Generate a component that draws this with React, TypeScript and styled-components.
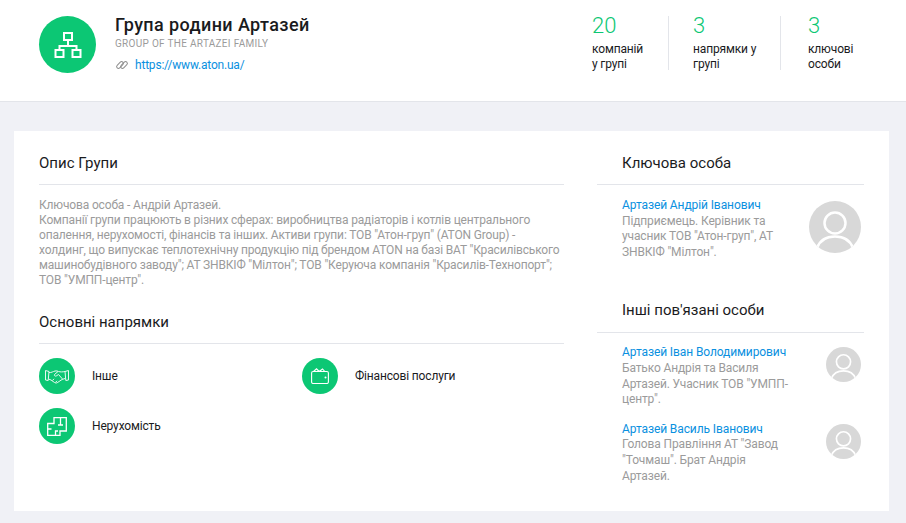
import styled, { createGlobalStyle } from 'styled-components';

const GlobalStyle = createGlobalStyle`
    html, body {
        margin: 0;
        padding: 0;
        background-color: #f0f1f6;
        font-family: Roboto, 'Liberation Sans', sans-serif;
    }
`;

const Page = styled.div`
    width: 906px;
    height: 523px;
    overflow: hidden;
`;

const Header = styled.header`
    height: 101px;
    background-color: white;
    border-bottom: 1px solid #e3e5ea;
    display: flex;
    flex-direction: row;
    justify-content: space-between;
    padding-left: 39px;
`;

const Brand = styled.div`
    display: flex;
    flex-direction: row;
    padding-top: 16px;
`;

const BrandLogo = styled.div`
    width: 57px;
    height: 57px;
    border-radius: 50%;
    background-color: #0cc774;
    display: flex;
    align-items: center;
    justify-content: center;
    margin-right: 19px;
`;

const BrandText = styled.div`
    display: flex;
    flex-direction: column;
`;

const BrandTitle = styled.h1`
    margin: 0;
    font-size: 18px;
    line-height: 17px;
    font-weight: 500;
    letter-spacing: 0.4px;
    color: #1a1b1d;
`;

const BrandSubtitle = styled.div`
    margin-top: 5px;
    font-size: 10px;
    line-height: 12px;
    letter-spacing: 0.3px;
    color: #9b9b9b;
    text-transform: uppercase;
`;

const BrandLink = styled.div`
    margin-top: 8px;
    display: flex;
    flex-direction: row;
    align-items: center;
    gap: 6px;
    font-size: 12px;
    line-height: 14px;
    letter-spacing: -0.2px;
    color: #0a90e0;
`;

const Stats = styled.div`
    display: flex;
    flex-direction: row;
    padding-top: 16px;
`;

const Stat = styled.div<{ $width: number; $pad: number; $last?: boolean }>`
    width: ${(props) => props.$width}px;
    height: 54px;
    box-sizing: border-box;
    padding-left: ${(props) => props.$pad}px;
    border-right: ${(props) => (props.$last ? 'none' : '1px solid #e3e5ea')};
`;

const StatNumber = styled.div`
    font-size: 22px;
    line-height: 20px;
    font-weight: 300;
    color: #0cc774;
`;

const StatLabel = styled.div`
    margin-top: 6px;
    font-size: 12px;
    line-height: 15px;
    letter-spacing: -0.15px;
    color: #1a1b1d;
`;

const Content = styled.main`
    padding: 29px 17px 0 14px;
`;

const Card = styled.section`
    height: 380px;
    background-color: white;
    display: flex;
    flex-direction: row;
    padding-left: 25px;
`;

const LeftColumn = styled.div`
    width: 525px;
    margin-right: 33px;
`;

const RightColumn = styled.div`
    width: 267px;
`;

const SectionTitle = styled.h2<{ $indent?: boolean; $height?: number }>`
    margin: 0;
    height: ${(props) => props.$height ?? 54}px;
    box-sizing: border-box;
    padding-top: 23px;
    padding-left: ${(props) => (props.$indent ? '25px' : '0')};
    font-size: 15px;
    line-height: 18px;
    font-weight: 400;
    color: #1a1b1d;
    border-bottom: 1px solid #e3e5ea;
`;

const Description = styled.p`
    margin: 13px 0 2px 0;
    font-size: 12px;
    line-height: 15px;
    letter-spacing: -0.16px;
    color: #9b9b9b;
`;

const Directions = styled.div`
    margin-top: 14px;
    display: grid;
    grid-template-columns: 263px 262px;
    row-gap: 14px;
`;

const Direction = styled.div`
    display: flex;
    flex-direction: row;
    align-items: center;
    gap: 17px;
    font-size: 12px;
    line-height: 34px;
    letter-spacing: -0.16px;
    color: #1a1b1d;
`;

const DirectionIcon = styled.div`
    width: 36px;
    height: 36px;
    border-radius: 50%;
    background-color: #0cc774;
    display: flex;
    align-items: center;
    justify-content: center;
`;

const Person = styled.div<{ $top: number }>`
    margin-top: ${(props) => props.$top}px;
    padding: 0 3px 0 25px;
    display: flex;
    flex-direction: row;
    justify-content: space-between;
`;

const PersonText = styled.div`
    width: 170px;
    font-size: 12px;
    line-height: 15.6px;
    letter-spacing: -0.14px;
    color: #9b9b9b;
`;

const PersonName = styled.div`
    letter-spacing: -0.1px;
    color: #0a90e0;
`;

const OtherTitle = styled.div`
    margin-top: 18px;
`;

const AvatarSlot = styled.div<{ $size: number; $top: number }>`
    width: ${(props) => props.$size}px;
    height: ${(props) => props.$size}px;
    margin-top: ${(props) => props.$top}px;
`;

const LogoIcon = () => (
    <svg width="28" height="28" viewBox="0 0 28 28" fill="none" stroke="white" strokeWidth="2">
        <rect x="10" y="2" width="8" height="7" />
        <rect x="1.5" y="19" width="8" height="7" />
        <rect x="18.5" y="19" width="8" height="7" />
        <path d="M14 9v6M5.5 19v-4h17v4" />
    </svg>
);

const LinkIcon = () => (
    <svg width="14" height="12" viewBox="0 0 14 12" fill="none" stroke="#8f8f8f" strokeWidth="1">
        <rect x="1" y="4.2" width="8" height="3.6" rx="1.800" transform="rotate(-45 5 6)" />
        <rect x="5" y="4.2" width="8" height="3.6" rx="1.800" transform="rotate(-45 9 6)" />
    </svg>
);

const HandshakeIcon = () => (
    <svg width="24" height="15" viewBox="0 0 24 15" fill="none" stroke="white" strokeWidth="1" opacity="0.9">
        <path d="M.5 1.500l3.500 1-.8 9-2.700-.5zM23.500 1.500l-3.500 1 .8 9 2.700-.5z" />
        <path d="M4 3.500c2.500.3 4-1 6-1.500 1.500-.3 2.500 0 3.500.5 2 .6 4 .5 6.500 0" />
        <path d="M3.500 10l2.500 1 3.500 2.500c1.200.8 2.500.6 3.500-.3l4-2.700 3-1" />
        <path d="M13 2.500L9.500 5.500c-.6 1 .6 2 1.700 1.500l2.300-1.500 4 4.500" />
        <path d="M7.500 11.500l1.500-1.700M10.500 13.500l1.500-1.700" />
    </svg>
);

const WalletIcon = () => (
    <svg width="18" height="16" viewBox="0 0 18 16" fill="none" stroke="white" strokeWidth="1.1">
        <rect x="0.6" y="3.500" width="16.800" height="12" rx="1.500" />
        <path d="M2.500 3.500L5.500.8l2.700 2.700M8.200 3.500L11.500 1l2.300 2.500" />
        <circle cx="14.500" cy="9.500" r="1" fill="white" stroke="none" />
    </svg>
);

const PlanIcon = () => (
    <svg width="20" height="19" viewBox="0 0 20 19" fill="none" stroke="white" strokeWidth="1.300">
        <path d="M7 6.500V.7h12.300v13.300H13v4.300H.7V6.500z" />
        <path d="M13.500.7v7.300M11 8h5M.7 12H4.500M8.500 18.300V14H11" />
    </svg>
);

const Avatar = ({ size, top }: { size: number; top: number }) => (
    <AvatarSlot $size={size} $top={top}>
        <svg width={size} height={size} viewBox="0 0 52 52">
            <defs>
                <clipPath id={`avatar-${size}`}>
                    <circle cx="26" cy="26" r="26" />
                </clipPath>
            </defs>
            <circle cx="26" cy="26" r="26" fill="#d8d8d8" />
            <circle cx="26" cy="22" r="10.500" fill="none" stroke="white" strokeWidth="2.500" />
            <path
                d="M8 47c3-8 10-11.500 18-11.500S41 39 44 47"
                fill="none"
                stroke="white"
                strokeWidth="2.500"
                clipPath={`url(#avatar-${size})`}
            />
        </svg>
    </AvatarSlot>
);

const App = () => {
    return (
        <Page>
            <GlobalStyle />
            <Header>
                <Brand>
                    <BrandLogo>
                        <LogoIcon />
                    </BrandLogo>
                    <BrandText>
                        <BrandTitle>Група родини Артазей</BrandTitle>
                        <BrandSubtitle>Group of the Artazei family</BrandSubtitle>
                        <BrandLink>
                            <LinkIcon />
                            https://www.aton.ua/
                        </BrandLink>
                    </BrandText>
                </Brand>
                <Stats>
                    <Stat $width={101} $pad={24}>
                        <StatNumber>20</StatNumber>
                        <StatLabel>
                            компаній
                            <br />у групі
                        </StatLabel>
                    </Stat>
                    <Stat $width={112} $pad={24}>
                        <StatNumber>3</StatNumber>
                        <StatLabel>
                            напрямки у
                            <br />
                            групі
                        </StatLabel>
                    </Stat>
                    <Stat $width={125} $pad={27} $last>
                        <StatNumber>3</StatNumber>
                        <StatLabel>
                            ключові
                            <br />
                            особи
                        </StatLabel>
                    </Stat>
                </Stats>
            </Header>
            <Content>
                <Card>
                    <LeftColumn>
                        <SectionTitle>Опис Групи</SectionTitle>
                        <Description>
                            Ключова особа - Андрій Артазей.
                            <br />
                            Компанії групи працюють в різних сферах: виробництва радіаторів і котлів центрального
                            опалення, нерухомості, фінансів та інших. Активи групи: ТОВ "Атон-груп" (ATON Group) -
                            холдинг, що випускає теплотехнічну продукцію під брендом ATON на базі ВАТ "Красилівського
                            машинобудівного заводу"; АТ ЗНВКІФ "Мілтон"; ТОВ "Керуюча компанія "Красилів-Технопорт";
                            ТОВ "УМПП-центр".
                        </Description>
                        <SectionTitle>Основні напрямки</SectionTitle>
                        <Directions>
                            <Direction>
                                <DirectionIcon>
                                    <HandshakeIcon />
                                </DirectionIcon>
                                Інше
                            </Direction>
                            <Direction>
                                <DirectionIcon>
                                    <WalletIcon />
                                </DirectionIcon>
                                Фінансові послуги
                            </Direction>
                            <Direction>
                                <DirectionIcon>
                                    <PlanIcon />
                                </DirectionIcon>
                                Нерухомість
                            </Direction>
                        </Directions>
                    </LeftColumn>
                    <RightColumn>
                        <SectionTitle $indent>Ключова особа</SectionTitle>
                        <Person $top={13}>
                            <PersonText>
                                <PersonName>Артазей Андрій Іванович</PersonName>
                                Підприємець. Керівник та учасник ТОВ "Атон-груп", АТ ЗНВКІФ "Мілтон".
                            </PersonText>
                            <Avatar size={52} top={3} />
                        </Person>
                        <OtherTitle>
                            <SectionTitle $indent $height={55}>
                                Інші пов'язані особи
                            </SectionTitle>
                        </OtherTitle>
                        <Person $top={12}>
                            <PersonText>
                                <PersonName>Артазей Іван Володимирович</PersonName>
                                Батько Андрія та Василя Артазей. Учасник ТОВ "УМПП-центр".
                            </PersonText>
                            <Avatar size={35} top={2} />
                        </Person>
                        <Person $top={14}>
                            <PersonText>
                                <PersonName>Артазей Василь Іванович</PersonName>
                                Голова Правління АТ "Завод "Точмаш". Брат Андрія Артазей.
                            </PersonText>
                            <Avatar size={35} top={2} />
                        </Person>
                    </RightColumn>
                </Card>
            </Content>
        </Page>
    );
};

export default App;
